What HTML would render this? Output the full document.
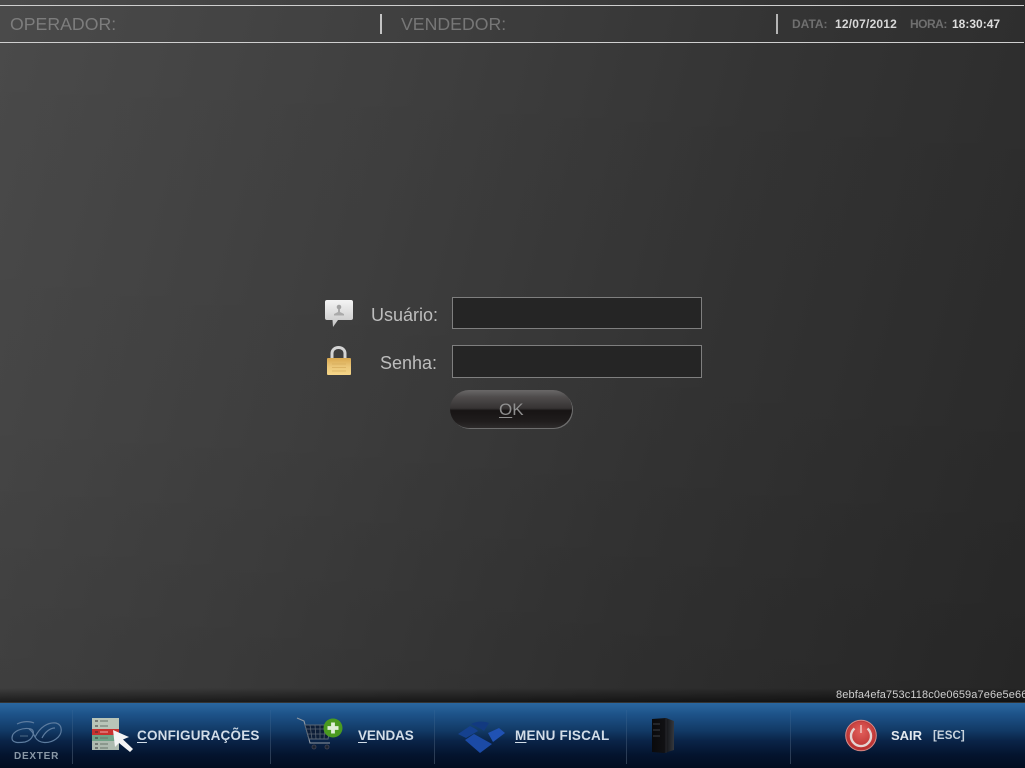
<!DOCTYPE html>
<html lang="pt">
<head>
<meta charset="utf-8">
<title>Dexter</title>
<style>
html,body{margin:0;padding:0}
body{width:1025px;height:768px;overflow:hidden;position:relative;font-family:"Liberation Sans",sans-serif;background:#333}
#bg{position:absolute;left:0;top:0;width:1025px;height:702px;background:linear-gradient(105deg,#4a4a4a 0%,#3f3f3f 35%,#343434 65%,#2a2a2a 100%)}
#bgb{position:absolute;left:0;top:0;width:1025px;height:702px;background:linear-gradient(180deg,rgba(0,0,0,0) 0%,rgba(0,0,0,.03) 60%,rgba(0,0,0,.1) 98%,rgba(0,0,0,.6) 100%)}
.abs{position:absolute;white-space:nowrap}
.hl{position:absolute;left:0;width:1024px;height:1px;background:#cfcfcf}
.vl{position:absolute;width:2px;height:20px;background:#c4c4c4;top:14px}
.hd{font-size:17.7px;color:#7d7d7d;line-height:20px;top:14px}
.sm{font-size:12px;font-weight:bold;line-height:14px;top:17px}
.lb{font-size:18px;color:#bdbdbd;line-height:20px}
.inp{position:absolute;left:452px;width:248px;background:#252525;border:1px solid #7f7f7f}
#ok{position:absolute;left:450px;top:390px;width:122px;height:38px;border-radius:19px;background:linear-gradient(180deg,#6a6868 0%,#4f4c4c 18%,#363333 48%,#171414 54%,#1f1c1c 82%,#2e2b2b 100%);box-shadow:1px 1px 0 #6d6d6d}
#ok span{position:absolute;left:49px;top:10px;font-size:17px;line-height:20px;color:#8f8f8f}
#bar{position:absolute;left:0;top:703px;width:1025px;height:65px;background:linear-gradient(180deg,#2a67a0 0%,#1d5288 18%,#123a66 42%,#0a2448 58%,#04142e 80%,#020d20 100%)}
.sep{position:absolute;top:710px;width:1px;height:54px;background:linear-gradient(180deg,rgba(120,150,180,.08),rgba(150,170,190,.3))}
.mn{font-size:13.5px;font-weight:bold;color:#d2dde8;line-height:16px;letter-spacing:.2px}
u{text-underline-offset:2px}
</style>
</head>
<body>
<div id="bg"></div>
<div id="bgb"></div>

<div class="hl" style="top:5px"></div>
<div class="hl" style="top:42px"></div>
<div class="abs hd" style="left:10px">OPERADOR:</div>
<div class="vl" style="left:380px"></div>
<div class="abs hd" style="left:401px;color:#777">VENDEDOR:</div>
<div class="vl" style="left:776px;background:#b5b5b5"></div>
<div class="abs sm" style="left:792px;color:#6f6f6f">DATA:</div>
<div class="abs sm" style="left:835px;color:#d8d8d8;letter-spacing:.2px">12/07/2012</div>
<div class="abs sm" style="left:910px;color:#6f6f6f;letter-spacing:-.5px">HORA:</div>
<div class="abs sm" style="left:952px;color:#dedede">18:30:47</div>

<svg class="abs" style="left:324px;top:299px" width="30" height="29" viewBox="0 0 30 29">
<defs><linearGradient id="bub" x1="0" y1="0" x2="0" y2="1"><stop offset="0" stop-color="#f4f4f4"/><stop offset="1" stop-color="#c4c4c4"/></linearGradient></defs>
<path d="M3 1H27Q29 1 29 3V19Q29 21 27 21H14L9 28L8.500 21H3Q1 21 1 19V3Q1 1 3 1Z" fill="url(#bub)"/>
<circle cx="15" cy="8" r="2.300" fill="#a2a2a2"/>
<path d="M14 10H16V13L20 15V16.500H10V15L14 13Z" fill="#aaaaaa"/>
</svg>
<svg class="abs" style="left:325px;top:344px" width="27" height="32" viewBox="0 0 27 32">
<defs><linearGradient id="lk" x1="0" y1="0" x2="0" y2="1"><stop offset="0" stop-color="#d9a84e"/><stop offset=".5" stop-color="#eac679"/><stop offset="1" stop-color="#f6d688"/></linearGradient></defs>
<path d="M7 15V9.500C7 1.500 20 1.500 20 9.500V15" fill="none" stroke="#d4d4d4" stroke-width="3"/>
<rect x="2" y="14" width="24" height="17" rx="1" fill="url(#lk)"/>
<path d="M7 20H21M7 23.500H21M7 27H21" stroke="#d2a858" stroke-width="1" opacity=".6"/>
</svg>

<div class="abs lb" style="left:371px;top:305px">Usuário:</div>
<div class="abs lb" style="left:380px;top:353px">Senha:</div>
<div class="inp" style="top:297px;height:30px"></div>
<div class="inp" style="top:345px;height:31px"></div>
<div id="ok"><span><u>O</u>K</span></div>

<div class="abs" style="left:836px;top:689px;font-size:11px;line-height:13px;color:#cfcfcf;letter-spacing:.12px">8ebfa4efa753c118c0e0659a7e6e5e66</div>

<div id="bar"></div>
<div class="sep" style="left:72px"></div>
<div class="sep" style="left:270px"></div>
<div class="sep" style="left:434px"></div>
<div class="sep" style="left:626px"></div>
<div class="sep" style="left:790px"></div>

<svg class="abs" style="left:10px;top:720px" width="54" height="26" viewBox="0 0 54 26">
<g fill="none" stroke="#5d7c9f" stroke-width="1.200">
<path d="M7 4C13 1 20 1 24 3"/>
<path d="M2 18C2 11 13 7 21 9C26 11 23 20 15 22C8 23 2 23 2 18Z"/>
<path d="M25 17C30 7 38 2 46 3C53 5 53 14 46 19C39 24 29 24 25 17C23 13 22 11 19 9"/>
<path d="M32 18C35 12 40 8 45 8"/>
<path d="M10 16H18" stroke="#44617f"/>
</g>
</svg>
<div class="abs" style="left:14px;top:751px;font-size:10px;font-weight:bold;line-height:12px;color:#8a98a6;letter-spacing:.75px">DEXTER</div>

<svg class="abs" style="left:90px;top:716px" width="46" height="38" viewBox="0 0 46 38">
<rect x="2" y="2" width="27" height="11" fill="#b9c5b8"/>
<rect x="2" y="13" width="27" height="6" fill="#c8322f"/>
<rect x="2" y="19" width="27" height="6" fill="#6fa287"/>
<rect x="2" y="25" width="27" height="9" fill="#aebbb0"/>
<path d="M5 5H8M5 10H8M5 16H8M5 22H8M5 28H8M5 32H8" stroke="#333" stroke-width="1"/>
<path d="M10 5H18M10 10H18M10 22H18M10 28H18M10 32H18" stroke="#68746a" stroke-width="1"/>
<path d="M10 16H18" stroke="#eaa" stroke-width="1"/>
<path d="M23 14L25 31L29 27L40 36L43 33L33 23.500L39 21Z" fill="#f4f4f4"/>
</svg>
<div class="abs mn" style="left:137px;top:728px"><u>C</u>ONFIGURAÇÕES</div>

<svg class="abs" style="left:295px;top:716px" width="50" height="38" viewBox="0 0 50 38">
<path d="M2 2L9 5L15 27H35" fill="none" stroke="#8f98a2" stroke-width="1.100"/>
<path d="M10 9H36L33 23H14Z" fill="#0d1e38" stroke="#5c6775" stroke-width="1"/>
<path d="M15 9L17 23M20 9L21 23M25 9V23M30 9L29 23M11 13H35M12.500 18H34" stroke="#596471" stroke-width=".8"/>
<circle cx="19" cy="31" r="2" fill="#1c2430" stroke="#445" stroke-width=".8"/>
<circle cx="32" cy="31" r="2" fill="#1c2430" stroke="#445" stroke-width=".8"/>
<circle cx="38" cy="12" r="9.500" fill="#4a9a20"/>
<path d="M38 6.500V17.500M32.500 12H43.500" stroke="#dfeed8" stroke-width="3.800"/>
</svg>
<div class="abs mn" style="left:358px;top:728px;letter-spacing:-.1px"><u>V</u>ENDAS</div>

<svg class="abs" style="left:456px;top:719px" width="50" height="36" viewBox="0 0 50 36">
<path d="M2 15L14 7C18 9 20 10 22 12L10 19Z" fill="#15418f"/>
<path d="M15 5C20 2 28 2 33 4L28 12C24 9 19 7 15 5Z" fill="#123a80"/>
<path d="M32 14L43 9L49 14L37 23Z" fill="#2052b4"/>
<path d="M9 21L18 15L36 25L24 34Z" fill="#1b4aa6"/>
</svg>
<div class="abs mn" style="left:515px;top:728px"><u>M</u>ENU FISCAL</div>

<svg class="abs" style="left:650px;top:717px" width="26" height="37" viewBox="0 0 26 37">
<defs><linearGradient id="pc" x1="0" y1="0" x2="1" y2="0"><stop offset="0" stop-color="#0a0a0c"/><stop offset=".6" stop-color="#111114"/><stop offset="1" stop-color="#34383e"/></linearGradient></defs>
<path d="M2 2L16 1L24 4V33L14 36L2 35Z" fill="url(#pc)"/>
<path d="M16 1V36" stroke="#26282c" stroke-width="1"/>
<path d="M3 7H10M3 13H10M3 19H10" stroke="#3c3f44" stroke-width="1"/>
</svg>

<svg class="abs" style="left:845px;top:719px" width="33" height="33" viewBox="0 0 33 33">
<defs><radialGradient id="pw" cx=".5" cy=".35" r=".7"><stop offset="0" stop-color="#e2605c"/><stop offset="1" stop-color="#b52a2a"/></radialGradient></defs>
<circle cx="16" cy="16.500" r="15.300" fill="#b83a3a" stroke="#d98c88" stroke-width="1"/>
<circle cx="16" cy="16.500" r="14" fill="url(#pw)"/>
<path d="M9.500 9.500A10 10 0 1 0 22.500 9.500" fill="none" stroke="#e4d4d2" stroke-width="2.400"/>
<path d="M16 6V14" stroke="#eebcb8" stroke-width="1.600"/>
</svg>
<div class="abs mn" style="left:891px;top:728px;font-size:13px;color:#e2e8ee;letter-spacing:0">SAIR</div>
<div class="abs" style="left:933px;top:729px;font-size:11.5px;font-weight:bold;line-height:15px;color:#c9d4de;letter-spacing:.1px">[ESC]</div>
</body>
</html>
